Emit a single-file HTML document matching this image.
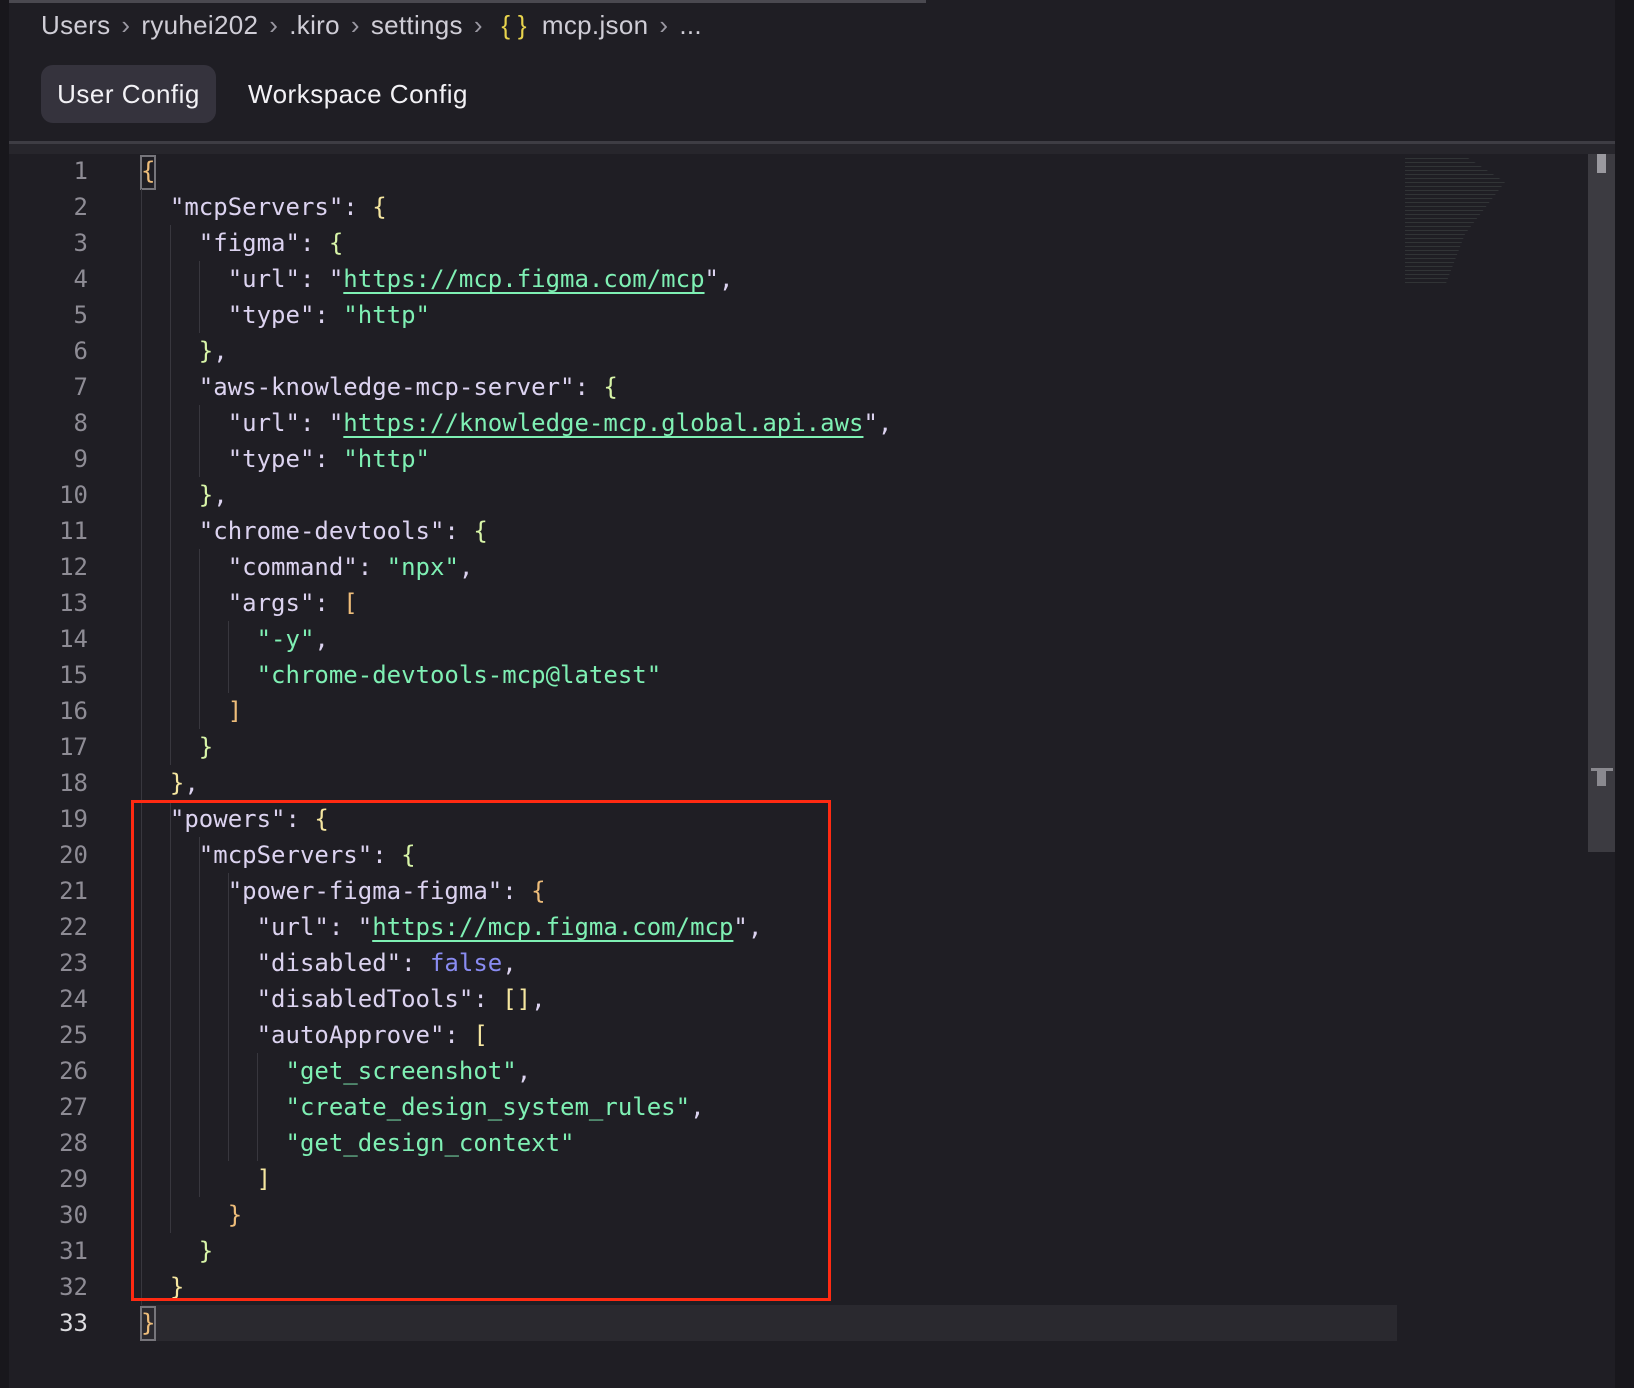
<!DOCTYPE html>
<html><head><meta charset="utf-8"><style>
*{margin:0;padding:0;box-sizing:border-box}
body{width:1634px;height:1388px;background:#1f1e24;position:relative;overflow:hidden;font-family:"Liberation Sans",sans-serif}
.abs{position:absolute}
.crumb{left:41px;top:10px;font-size:26px;color:#cfcdd6;white-space:pre;letter-spacing:0.3px}
.crumb .sep{color:#9a98a2;padding:0 11px}
.tab{top:65px;height:58px;line-height:58px;font-size:26px;color:#f2f1f5;letter-spacing:0.5px}
.code{font-family:"DejaVu Sans Mono","Liberation Mono",monospace;font-size:24px;white-space:pre;line-height:36px;height:36px}
.ln{left:0;width:88px;text-align:right;color:#8e8c95}
.tx{left:141px;color:#dcd3f0}
.s{color:#7ff0b4}.u{color:#7ff0b4;text-decoration:underline;text-underline-offset:5px}
.b1{color:#eebd7a}.b2{color:#f5e6a0}.b3{color:#d8f5a8}.f{color:#8a8cf2}
.g{position:absolute;width:1px;background:#38373e}
</style></head><body>
<div class="abs" style="left:0;top:0;width:9px;height:1388px;background:#18171c"></div>
<div class="abs" style="left:9px;top:0;width:917px;height:3px;background:#4a4950"></div>
<div class="abs crumb">Users<span class="sep">›</span>ryuhei202<span class="sep">›</span>.kiro<span class="sep">›</span>settings<span class="sep">›</span> <span style="color:#e8d44d">{ }</span>  mcp.json<span class="sep">›</span>...</div>
<div class="abs tab" style="left:41px;width:175px;background:#35333d;border-radius:12px;text-align:center">User Config</div>
<div class="abs tab" style="left:248px">Workspace Config</div>
<div class="abs" style="left:9px;top:141px;width:1606px;height:3px;background:#3e3d44"></div>
<div class="abs" style="left:9px;top:144px;width:1606px;height:10px;background:#27262c"></div>
<div class="abs" style="left:1588px;top:154px;width:27px;height:698px;background:#3c3b41"></div>
<div class="abs" style="left:1597px;top:154px;width:9px;height:19px;background:#9a999f"></div>
<div class="abs" style="left:1591px;top:768px;width:22px;height:3px;background:#8a898f"></div>
<div class="abs" style="left:1597px;top:768px;width:9px;height:18px;background:#8a898f"></div>
<div class="abs" style="left:1615px;top:0;width:19px;height:1388px;background:#18171c"></div>
<div class="abs" style="left:141px;top:1305px;width:1256px;height:36px;background:#2a292f"></div>
<div class="abs" style="left:140px;top:1306px;width:16px;height:35px;border:2px solid #76757b"></div>
<div class="abs" style="left:140px;top:155px;width:16px;height:35px;border:2px solid #76757b"></div>
<div class="g" style="left:141px;top:189px;height:1116px"></div>
<div class="g" style="left:170px;top:225px;height:540px"></div>
<div class="g" style="left:170px;top:801px;height:432px"></div>
<div class="g" style="left:199px;top:261px;height:72px"></div>
<div class="g" style="left:199px;top:405px;height:72px"></div>
<div class="g" style="left:199px;top:549px;height:180px"></div>
<div class="g" style="left:199px;top:837px;height:360px"></div>
<div class="g" style="left:228px;top:621px;height:72px"></div>
<div class="g" style="left:228px;top:873px;height:288px"></div>
<div class="g" style="left:257px;top:1053px;height:108px"></div>
<div class="abs" style="left:1405px;top:156px;width:100px;height:130px;opacity:.2;background:repeating-linear-gradient(#1f1e24 0 2px,#7a8a80 2px 3px,#1f1e24 3px 4px);clip-path:polygon(0 0,60% 0,100% 20%,60% 60%,40% 100%,0 100%)"></div>
<div class="abs code ln" style="top:153px">1</div>
<div class="abs code ln" style="top:189px">2</div>
<div class="abs code ln" style="top:225px">3</div>
<div class="abs code ln" style="top:261px">4</div>
<div class="abs code ln" style="top:297px">5</div>
<div class="abs code ln" style="top:333px">6</div>
<div class="abs code ln" style="top:369px">7</div>
<div class="abs code ln" style="top:405px">8</div>
<div class="abs code ln" style="top:441px">9</div>
<div class="abs code ln" style="top:477px">10</div>
<div class="abs code ln" style="top:513px">11</div>
<div class="abs code ln" style="top:549px">12</div>
<div class="abs code ln" style="top:585px">13</div>
<div class="abs code ln" style="top:621px">14</div>
<div class="abs code ln" style="top:657px">15</div>
<div class="abs code ln" style="top:693px">16</div>
<div class="abs code ln" style="top:729px">17</div>
<div class="abs code ln" style="top:765px">18</div>
<div class="abs code ln" style="top:801px">19</div>
<div class="abs code ln" style="top:837px">20</div>
<div class="abs code ln" style="top:873px">21</div>
<div class="abs code ln" style="top:909px">22</div>
<div class="abs code ln" style="top:945px">23</div>
<div class="abs code ln" style="top:981px">24</div>
<div class="abs code ln" style="top:1017px">25</div>
<div class="abs code ln" style="top:1053px">26</div>
<div class="abs code ln" style="top:1089px">27</div>
<div class="abs code ln" style="top:1125px">28</div>
<div class="abs code ln" style="top:1161px">29</div>
<div class="abs code ln" style="top:1197px">30</div>
<div class="abs code ln" style="top:1233px">31</div>
<div class="abs code ln" style="top:1269px">32</div>
<div class="abs code ln" style="top:1305px;color:#dcdce0">33</div>
<div class="abs code tx" style="top:153px"><span class="b1">{</span></div>
<div class="abs code tx" style="top:189px">  "mcpServers": <span class="b2">{</span></div>
<div class="abs code tx" style="top:225px">    "figma": <span class="b3">{</span></div>
<div class="abs code tx" style="top:261px">      "url": "<span class="u">https://mcp.figma.com/mcp</span>",</div>
<div class="abs code tx" style="top:297px">      "type": <span class="s">"http"</span></div>
<div class="abs code tx" style="top:333px">    <span class="b3">}</span>,</div>
<div class="abs code tx" style="top:369px">    "aws-knowledge-mcp-server": <span class="b3">{</span></div>
<div class="abs code tx" style="top:405px">      "url": "<span class="u">https://knowledge-mcp.global.api.aws</span>",</div>
<div class="abs code tx" style="top:441px">      "type": <span class="s">"http"</span></div>
<div class="abs code tx" style="top:477px">    <span class="b3">}</span>,</div>
<div class="abs code tx" style="top:513px">    "chrome-devtools": <span class="b3">{</span></div>
<div class="abs code tx" style="top:549px">      "command": <span class="s">"npx"</span>,</div>
<div class="abs code tx" style="top:585px">      "args": <span class="b1">[</span></div>
<div class="abs code tx" style="top:621px">        <span class="s">"-y"</span>,</div>
<div class="abs code tx" style="top:657px">        <span class="s">"chrome-devtools-mcp@latest"</span></div>
<div class="abs code tx" style="top:693px">      <span class="b1">]</span></div>
<div class="abs code tx" style="top:729px">    <span class="b3">}</span></div>
<div class="abs code tx" style="top:765px">  <span class="b2">}</span>,</div>
<div class="abs code tx" style="top:801px">  "powers": <span class="b2">{</span></div>
<div class="abs code tx" style="top:837px">    "mcpServers": <span class="b3">{</span></div>
<div class="abs code tx" style="top:873px">      "power-figma-figma": <span class="b1">{</span></div>
<div class="abs code tx" style="top:909px">        "url": "<span class="u">https://mcp.figma.com/mcp</span>",</div>
<div class="abs code tx" style="top:945px">        "disabled": <span class="f">false</span>,</div>
<div class="abs code tx" style="top:981px">        "disabledTools": <span class="b2">[]</span>,</div>
<div class="abs code tx" style="top:1017px">        "autoApprove": <span class="b2">[</span></div>
<div class="abs code tx" style="top:1053px">          <span class="s">"get_screenshot"</span>,</div>
<div class="abs code tx" style="top:1089px">          <span class="s">"create_design_system_rules"</span>,</div>
<div class="abs code tx" style="top:1125px">          <span class="s">"get_design_context"</span></div>
<div class="abs code tx" style="top:1161px">        <span class="b2">]</span></div>
<div class="abs code tx" style="top:1197px">      <span class="b1">}</span></div>
<div class="abs code tx" style="top:1233px">    <span class="b3">}</span></div>
<div class="abs code tx" style="top:1269px">  <span class="b2">}</span></div>
<div class="abs code tx" style="top:1305px"><span class="b1">}</span></div>
<div class="abs" style="left:131px;top:800px;width:700px;height:501px;border:3px solid #ff2a12"></div>
</body></html>
